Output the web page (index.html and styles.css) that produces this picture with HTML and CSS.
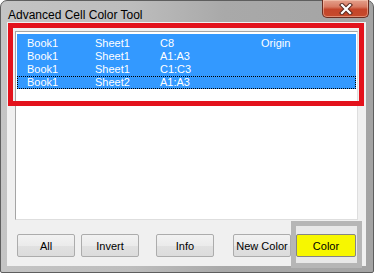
FILE: index.html
```
<!DOCTYPE html>
<html>
<head>
<meta charset="utf-8">
<link rel="stylesheet" href="styles.css">
</head>
<body>
<div class="window">
  <div class="titlebar">
    <span class="title">Advanced Cell Color Tool</span>
    <div class="close">
      <svg width="14" height="12" viewBox="0 0 14 12">
        <path d="M3 2 L11 10 M11 2 L3 10" stroke="#5a2a20" stroke-width="4.2" stroke-linecap="square"/>
        <path d="M3 2 L11 10 M11 2 L3 10" stroke="#ffffff" stroke-width="2.2" stroke-linecap="square"/>
      </svg>
    </div>
  </div>
  <div class="client">
    <div class="listbox">
      <div class="row sel first"><span>Book1</span><span>Sheet1</span><span>C8</span><span>Origin</span></div>
      <div class="row sel"><span>Book1</span><span>Sheet1</span><span>A1:A3</span><span></span></div>
      <div class="row sel"><span>Book1</span><span>Sheet1</span><span>C1:C3</span><span></span></div>
      <div class="row sel focus"><span>Book1</span><span>Sheet2</span><span>A1:A3</span><span></span></div>
    </div>
    <div class="buttons">
      <button class="btn b-all">All</button>
      <button class="btn b-invert">Invert</button>
      <button class="btn b-info">Info</button>
      <button class="btn b-new">New Color</button>
      <button class="btn b-color">Color</button>
    </div>
    <div class="annot-red"></div>
    <div class="annot-gray"></div>
  </div>
</div>
</body>
</html>
```
FILE: styles.css
```
* { box-sizing: border-box; }
html, body { margin: 0; padding: 0; background: #ffffff; }
body { width: 374px; height: 273px; overflow: hidden; font-family: "Liberation Sans", Arial, sans-serif; }

.window {
  width: 374px;
  height: 273px;
  border: 1px solid #5e5e5e;
  border-radius: 7px 7px 2px 2px;
  padding: 0 7px 6px 6px;
  background: linear-gradient(90deg, #c4c4c4 0%, #bdbdbd 35%, #a9a9a9 60%, #a4a4a4 100%);
  display: flex;
  flex-direction: column;
}

.titlebar {
  height: 21px;
  display: flex;
  align-items: flex-start;
  position: relative;
}
.title {
  padding-top: 7px;
  padding-left: 1px;
  font-size: 12px;
  line-height: 14px;
  color: #000;
}
.close {
  margin-left: auto;
  margin-right: -3px;
  margin-top: -1px;
  width: 47px;
  height: 18px;
  border: 1px solid #6a2c20;
  border-top: none;
  border-radius: 0 0 5px 5px;
  background: linear-gradient(180deg, #e4a08c 0%, #d87a62 40%, #c4452a 55%, #c64a2c 100%);
  box-shadow: inset 0 0 0 1px rgba(255,220,200,0.45);
  display: flex;
  align-items: center;
  justify-content: center;
}

.client {
  position: relative;
  flex: 1;
  background: #f0f0f0;
  padding: 9px 7px 0 8px;
}

.listbox {
  width: 343px;
  height: 189px;
  background: #ffffff;
  border: 1px solid #a5a5a5;
  border-right-color: #dedede;
  border-bottom-color: #dedede;
  padding: 2px 1px 0 1px;
  font-size: 11px;
  color: #ffffff;
}
.row {
  display: grid;
  grid-template-columns: 68px 65px 101px 1fr;
  padding-left: 10px;
  height: 13px;
  line-height: 13px;
  white-space: nowrap;
}
.row.first { height: 16px; padding-top: 3px; }
.row.sel { background: #3399ff; }
.row.focus { outline: 1px dotted #000; outline-offset: -1px; }

.buttons {
  display: flex;
  margin-top: 14px;
}
.btn {
  height: 23px;
  width: 58px;
  padding: 0;
  font-family: "Liberation Sans", Arial, sans-serif;
  font-size: 11px;
  color: #000;
  border: 1px solid #acacac;
  border-radius: 2px;
  background: linear-gradient(180deg, #f2f2f2 0%, #ebebeb 50%, #e1e1e1 51%, #dcdcdc 100%);
}
.b-all { margin-left: 2px; }
.b-invert { margin-left: 6px; }
.b-info { margin-left: 17px; }
.b-new { margin-left: 19px; }
.b-color { margin-left: 5px; width: 60px; background: #ffff00; border-color: #8a8a8a; }

.annot-red {
  position: absolute;
  left: 1px;
  top: 1px;
  width: 356px;
  height: 83px;
  border: 5px solid #e3121c;
  pointer-events: none;
}
.annot-gray {
  position: absolute;
  left: 284px;
  top: 199px;
  width: 71px;
  height: 47px;
  border: 5px solid #b6b6b6;
  background: rgba(0,0,0,0.03);
  pointer-events: none;
}
```
